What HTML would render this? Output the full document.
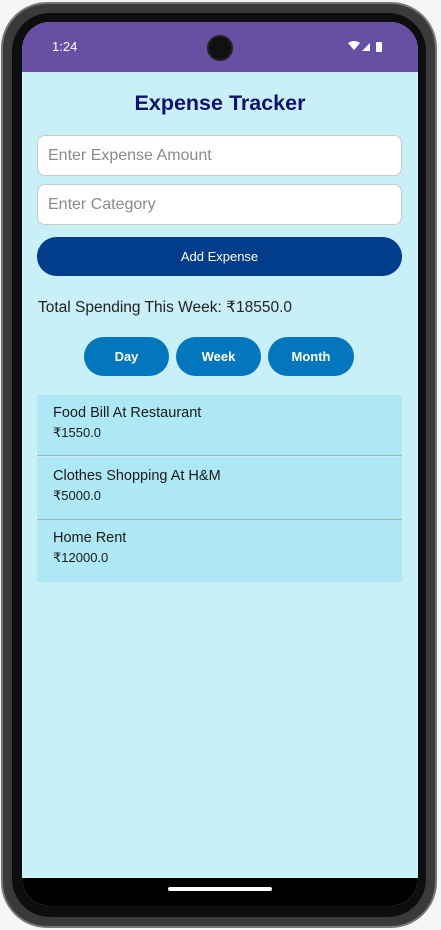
<!DOCTYPE html><html><head><style>
*{margin:0;padding:0;box-sizing:border-box}
body{width:441px;height:930px;background:#f4f6f8;position:relative;overflow:hidden;font-family:"Liberation Sans",sans-serif}
.frame{position:absolute;left:1px;top:2px;width:436px;height:926px;border-radius:46px;background:#3a3a3a;border:2px solid #777}
.inner{position:absolute;left:9px;top:9px;right:9px;bottom:9px;border-radius:38px;background:#0e0e0e}
.screen{position:absolute;left:22px;top:22px;width:396px;height:884px;border-radius:28px;overflow:hidden;background:#c9eff7}
.status{height:50px;background:#6750a4;color:#fff;font-size:13px;position:relative}
.cam{position:absolute;left:185px;top:13px;width:26px;height:26px;border-radius:50%;background:#111;border:2px solid #222}
.nav{position:absolute;left:0;bottom:0;width:100%;height:28px;background:#000}
.pill{position:absolute;left:146px;top:9px;width:104px;height:4px;border-radius:2px;background:#fff}
.in{position:absolute;left:15px;width:365px;height:41px;border:1px solid #c9c9c9;border-radius:8px;background:#fff;color:#8a8a8a;font-size:16px;padding:11px 0 0 10px}
.btn{position:absolute;background:#0277bd;color:#fff;font-size:13px;font-weight:bold;text-align:center;border-radius:20px}
.row{position:absolute;left:15px;width:365px;background:#ade8f4;padding:10px 0 0 16px;color:#1a1a1a}
.row b{display:block;font-size:14.5px;font-weight:normal}
.row span{display:block;font-size:13px;margin-top:4px}
</style></head><body>
<div class="frame"><div class="inner"></div></div>
<div class="screen">
<div class="status"><span style="position:absolute;left:30px;top:17px">1:24</span><div class="cam"></div>
<svg style="position:absolute;left:326px;top:19px" width="44" height="12"><path d="M0 2 Q6 -2 12 2 L6 9Z" fill="#fff"/><path d="M14 10 L22 2 L22 10Z" fill="#fff"/><rect x="28" y="1" width="6" height="10" rx="1" fill="#fff"/></svg></div>
<div style="position:absolute;top:69px;width:100%;text-align:center;color:#0d1270;font-size:21.5px;font-weight:bold">Expense Tracker</div>
<div class="in" style="top:113px">Enter Expense Amount</div>
<div class="in" style="top:162px">Enter Category</div>
<div class="btn" style="left:15px;top:215px;width:365px;height:39px;line-height:39px;background:#013d8a;font-weight:normal">Add Expense</div>
<div style="position:absolute;left:16px;top:276px;font-size:15.5px;color:#222">Total Spending This Week: ₹18550.0</div>
<div class="btn" style="left:62px;top:315px;width:85px;height:39px;line-height:39px">Day</div>
<div class="btn" style="left:154px;top:315px;width:85px;height:39px;line-height:39px">Week</div>
<div class="btn" style="left:246px;top:315px;width:86px;height:39px;line-height:39px">Month</div>
<div class="row" style="top:373px;height:61px;border-bottom:1px solid #9fb5bb"><b>Food Bill At Restaurant</b><span>₹1550.0</span></div>
<div class="row" style="top:435px;height:63px;border-bottom:1px solid #9fb5bb;padding-top:11px"><b>Clothes Shopping At H&amp;M</b><span>₹5000.0</span></div>
<div class="row" style="top:498px;height:62px;padding-top:10px"><b>Home Rent</b><span>₹12000.0</span></div>
<div class="nav"><div class="pill"></div></div>
</div>
</body></html>
